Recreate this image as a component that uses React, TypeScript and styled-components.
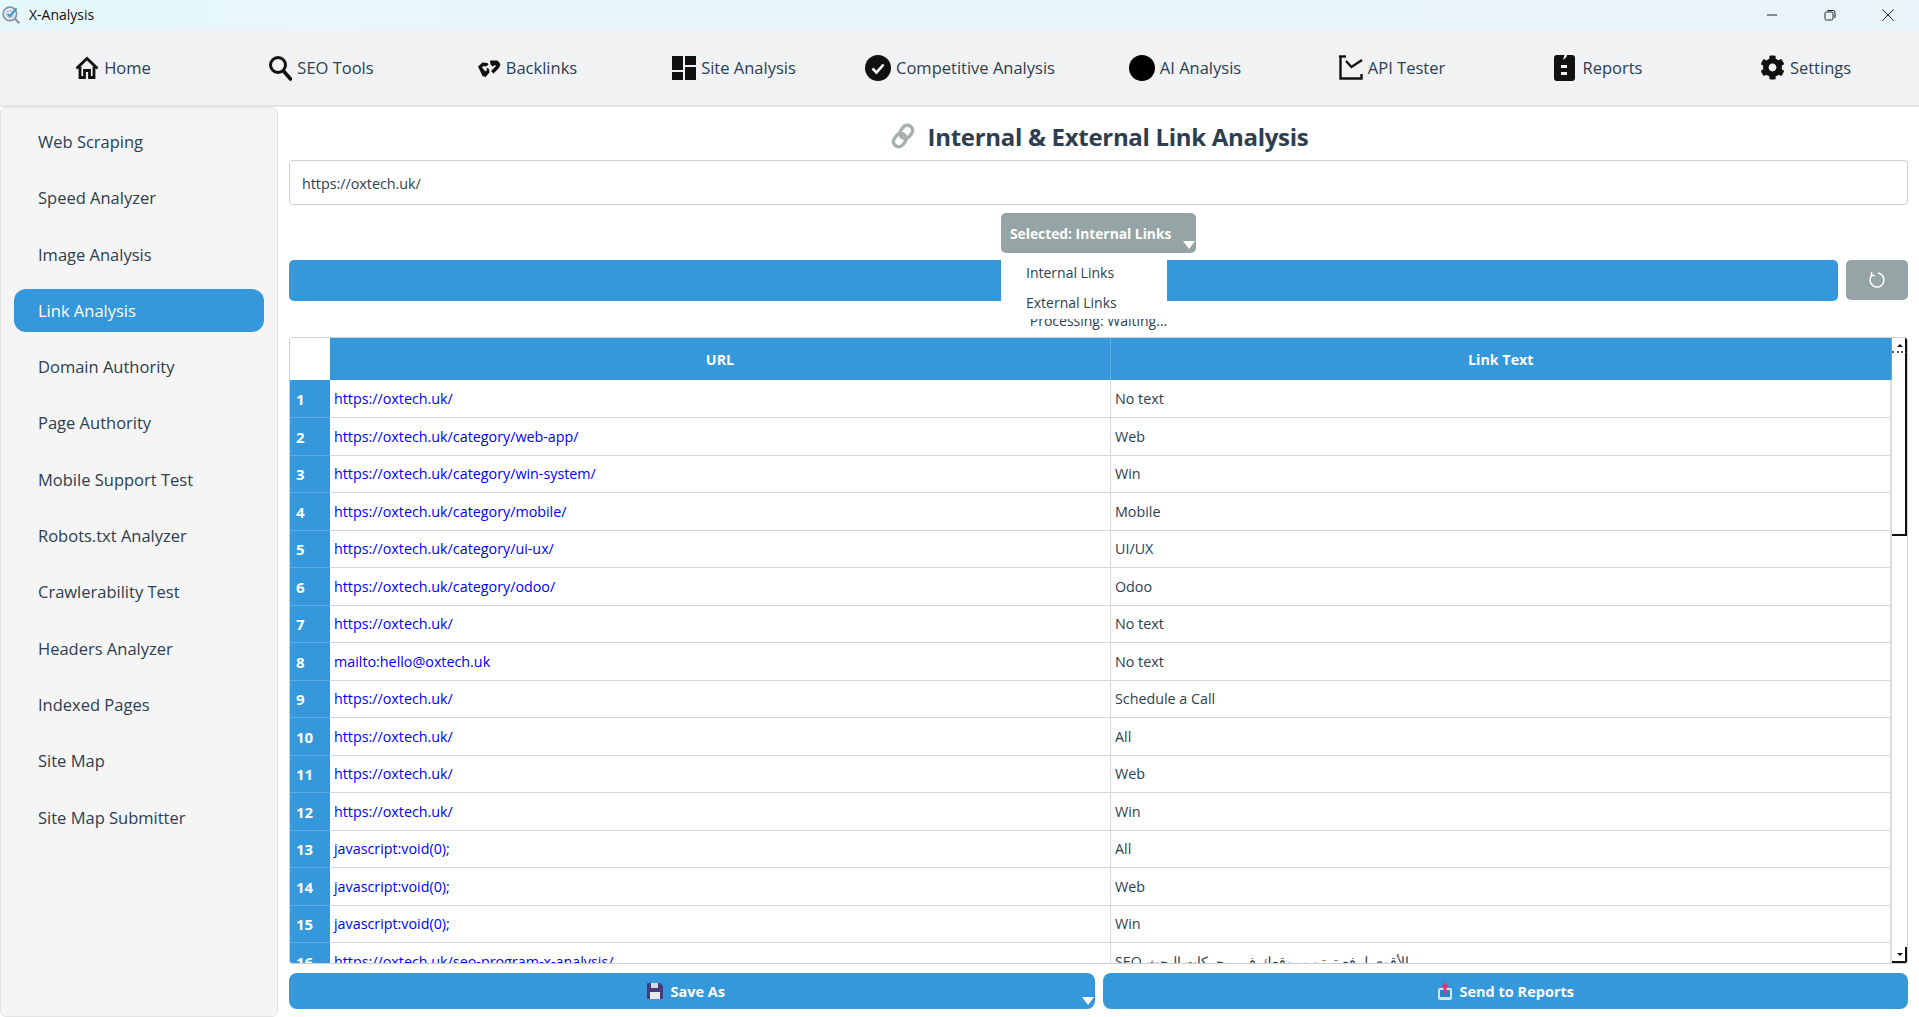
import { FC } from "react";
import styled, { createGlobalStyle } from "styled-components";
import { FaCog } from "react-icons/fa";

const sidebarItems = [
  "Web Scraping",
  "Speed Analyzer",
  "Image Analysis",
  "Link Analysis",
  "Domain Authority",
  "Page Authority",
  "Mobile Support Test",
  "Robots.txt Analyzer",
  "Crawlerability Test",
  "Headers Analyzer",
  "Indexed Pages",
  "Site Map",
  "Site Map Submitter",
];

const rows = [
  ["https://oxtech.uk/", "No text"],
  ["https://oxtech.uk/category/web-app/", "Web"],
  ["https://oxtech.uk/category/win-system/", "Win"],
  ["https://oxtech.uk/category/mobile/", "Mobile"],
  ["https://oxtech.uk/category/ui-ux/", "UI/UX"],
  ["https://oxtech.uk/category/odoo/", "Odoo"],
  ["https://oxtech.uk/", "No text"],
  ["mailto:hello@oxtech.uk", "No text"],
  ["https://oxtech.uk/", "Schedule a Call"],
  ["https://oxtech.uk/", "All"],
  ["https://oxtech.uk/", "Web"],
  ["https://oxtech.uk/", "Win"],
  ["javascript:void(0);", "All"],
  ["javascript:void(0);", "Web"],
  ["javascript:void(0);", "Win"],
  ["https://oxtech.uk/seo-program-x-analysis/", "SEO الأقوى لرفع ترتيب موقعك في محركات البحث"],
];

const HomeGlyph = () => (
  <svg width="24" height="24" viewBox="0 0 24 24" fill="none" stroke="#111" strokeWidth="2.8">
    <path d="M1.500 12.500 12 2.500l10.500 10" />
    <path d="M5 10.500V21.500h4.500v-7h5v7H19V10.500" />
  </svg>
);

const SearchGlyph = () => (
  <svg width="24" height="26" viewBox="0 0 24 26" fill="none" stroke="#111" strokeWidth="3">
    <circle cx="10" cy="10" r="7.500" />
    <path d="m15.500 16 7 8" strokeLinecap="round" strokeWidth="3.600" />
  </svg>
);

const BrokenLinkGlyph = () => (
  <svg width="24" height="18" viewBox="0 0 24 18" fill="#111">
    <path d="M1 7.500 5.500 3.500l5 .5 1 2-3 1.500L6.500 7 5 8.500l3.500 4 1.500-1.500-.500-2.500 2.500 1.500 .5 3.500-4 4.500-3-1Z" />
    <path d="M13 1.500h7.500L23.500 5 22 9l-5.500 5.500-2.500-2.500 5-5-1-1-2.500 1.500-2-2Z" />
  </svg>
);

const GridGlyph = () => (
  <svg width="24" height="24" viewBox="0 0 24 24" fill="#111">
    <rect x="0" y="0" width="11" height="14" />
    <rect x="13" y="0" width="11" height="9" />
    <rect x="13" y="11" width="11" height="13" />
    <rect x="0" y="16" width="11" height="8" />
  </svg>
);

const CheckGlyph = () => (
  <svg width="26" height="26" viewBox="0 0 26 26">
    <circle cx="13" cy="13" r="13" fill="#111" />
    <path d="m7.500 13.500 4 4 7-8" fill="none" stroke="#fff" strokeWidth="2.600" />
  </svg>
);

const DotGlyph = () => (
  <svg width="26" height="26" viewBox="0 0 26 26">
    <circle cx="13" cy="13" r="13" fill="#000" />
  </svg>
);

const ChartGlyph = () => (
  <svg width="24" height="25" viewBox="0 0 24 25" fill="none" stroke="#111" strokeWidth="2.400">
    <path d="M1.500 2v21.500h21V19" />
    <path d="M0 1.500h7" />
    <path d="m7 6 5.500 6L23 5" />
  </svg>
);

const ReportGlyph = () => (
  <svg width="24" height="26" viewBox="0 0 24 26">
    <path d="M3 0h7.500L9 5l3.500-3 .5-2H18a3 3 0 0 1 3 3v20a3 3 0 0 1-3 3H3a3 3 0 0 1-3-3V3a3 3 0 0 1 3-3Z" fill="#111" />
    <rect x="7" y="10" width="6" height="3" fill="#f1f2f4" />
    <rect x="7" y="17" width="6" height="3" fill="#f1f2f4" />
  </svg>
);

const navItems = [
  { label: "Home", icon: <HomeGlyph /> },
  { label: "SEO Tools", icon: <SearchGlyph /> },
  { label: "Backlinks", icon: <BrokenLinkGlyph /> },
  { label: "Site Analysis", icon: <GridGlyph /> },
  { label: "Competitive Analysis", icon: <CheckGlyph /> },
  { label: "AI Analysis", icon: <DotGlyph /> },
  { label: "API Tester", icon: <ChartGlyph /> },
  { label: "Reports", icon: <ReportGlyph /> },
  { label: "Settings", icon: <FaCog size={25} color="#111" /> },
];

const App: FC = () => {
  return (
    <StyledWindow>
      <GlobalStyle />
      <StyledTitleBar>
        <StyledAppName>
          <svg width="20" height="20" viewBox="0 0 18 18" fill="none">
            <circle cx="8" cy="8" r="6" stroke="#8a97a3" strokeWidth="1.600" />
            <circle cx="8" cy="8" r="3" stroke="#b5bec6" strokeWidth="1.200" />
            <path d="m12.500 12.500 4 4" stroke="#8a97a3" strokeWidth="2" />
            <path d="m6 8 2 2 6-7" stroke="#2f8fd0" strokeWidth="1.600" />
          </svg>
          X-Analysis
        </StyledAppName>
        <StyledWindowControls>
          <StyledWindowButton>
            <svg width="12" height="12" viewBox="0 0 12 12" stroke="#222" fill="none">
              <path d="M1 6h10" />
            </svg>
          </StyledWindowButton>
          <StyledWindowButton>
            <svg width="12" height="12" viewBox="0 0 12 12" stroke="#222" fill="none">
              <rect x="1" y="3" width="8" height="8" rx="1.500" />
              <path d="M3.500 1.500h5.500a2 2 0 0 1 2 2V9" />
            </svg>
          </StyledWindowButton>
          <StyledWindowButton>
            <svg width="12" height="12" viewBox="0 0 12 12" stroke="#222" fill="none">
              <path d="m.5.500 11 11M11.500.500l-11 11" />
            </svg>
          </StyledWindowButton>
        </StyledWindowControls>
      </StyledTitleBar>

      <StyledNav>
        {navItems.map((item) => (
          <StyledNavItem key={item.label}>
            {item.icon}
            {item.label}
          </StyledNavItem>
        ))}
      </StyledNav>

      <StyledBody>
        <StyledSidebar>
          {sidebarItems.map((item) => (
            <StyledSideItem key={item} $active={item === "Link Analysis"}>
              {item}
            </StyledSideItem>
          ))}
        </StyledSidebar>

        <StyledMain>
          <StyledHeading>
            <svg width="28" height="28" viewBox="0 0 24 24" fill="none" stroke="#a9aeb1" strokeWidth="3">
              <g transform="rotate(38 12 12)">
                <rect x="7.500" y="1.500" width="9" height="12" rx="4.500" />
                <rect x="7.500" y="10.500" width="9" height="12" rx="4.500" />
              </g>
            </svg>
            Internal &amp; External Link Analysis
          </StyledHeading>

          <StyledUrlInput readOnly value="https://oxtech.uk/" />

          <StyledDropdownRow>
            <StyledDropdown>
              Selected: Internal Links
              <StyledArrow />
              <StyledMenu>
                <StyledMenuItem>Internal Links</StyledMenuItem>
                <StyledMenuItem>External Links</StyledMenuItem>
              </StyledMenu>
            </StyledDropdown>
          </StyledDropdownRow>

          <StyledProgressRow>
            <StyledProgressBar />
            <StyledRefreshButton>
              <svg width="18" height="18" viewBox="0 0 18 18" fill="none" stroke="#fff" strokeWidth="1.500">
                <path d="M10 2.100A7 7 0 1 1 4 4.100" />
                <path d="M3.500 1v3.500h3.500" />
              </svg>
            </StyledRefreshButton>
          </StyledProgressRow>

          <StyledStatus>Processing: Waiting...</StyledStatus>

          <StyledTableFrame>
            <StyledTable>
              <colgroup>
                <col width="40" />
                <col />
                <col />
              </colgroup>
              <thead>
                <tr>
                  <StyledCorner />
                  <StyledHeadCell>URL</StyledHeadCell>
                  <StyledHeadCell>Link Text</StyledHeadCell>
                </tr>
              </thead>
              <tbody>
                {rows.map((row, index) => (
                  <tr key={index}>
                    <StyledRowNumber>{index + 1}</StyledRowNumber>
                    <StyledUrlCell>{row[0]}</StyledUrlCell>
                    <StyledTextCell>{row[1]}</StyledTextCell>
                  </tr>
                ))}
              </tbody>
            </StyledTable>
            <StyledScrollbar>
              <StyledScrollUp />
              <StyledScrollThumb />
              <StyledScrollDown />
            </StyledScrollbar>
          </StyledTableFrame>

          <StyledActions>
            <StyledActionButton $hasMenu>
              <svg width="16" height="16" viewBox="0 0 16 16">
                <path d="M0 1a1 1 0 0 1 1-1h12l3 3v12a1 1 0 0 1-1 1H1a1 1 0 0 1-1-1Z" fill="#4b3a78" />
                <rect x="3" y="9" width="10" height="7" fill="#e8e8ee" />
                <rect x="4" y="0" width="7" height="5" fill="#d8d8e2" />
              </svg>
              Save As
              <StyledArrow />
            </StyledActionButton>
            <StyledActionButton>
              <svg width="16" height="18" viewBox="0 0 16 18">
                <rect x="1" y="6" width="14" height="12" rx="2" fill="#cfe6f5" />
                <rect x="3" y="8" width="10" height="7" fill="#2a82c4" />
                <path d="M8 0 4 5h2.500v6h3V5H12Z" fill="#e8336b" />
              </svg>
              Send to Reports
            </StyledActionButton>
          </StyledActions>
        </StyledMain>
      </StyledBody>
    </StyledWindow>
  );
};

const uiFont = `"Open Sans", "Noto Sans", sans-serif`;

const GlobalStyle = createGlobalStyle`
  html, body {
    margin: 0;
    padding: 0;
    height: 100%;
    overflow: hidden;
    background: #fff;
  }
  #root {
    height: 100%;
  }
`;

const StyledWindow = styled.div`
  display: flex;
  flex-direction: column;
  height: 100vh;
  font-family: ${uiFont};
  color: #2c3e50;
`;

const StyledTitleBar = styled.div`
  display: flex;
  align-items: center;
  justify-content: space-between;
  height: 30px;
  background: linear-gradient(90deg, #e6f7fb, #e9f4fa);
`;

const StyledAppName = styled.div`
  display: flex;
  align-items: center;
  gap: 8px;
  padding: 0 0 1px 1px;
  font-size: 14px;
  color: #111;
`;

const StyledWindowControls = styled.div`
  display: flex;
  padding-right: 2px;
`;

const StyledWindowButton = styled.div`
  display: flex;
  align-items: center;
  justify-content: center;
  width: 58px;
  height: 30px;
`;

const StyledNav = styled.div`
  display: grid;
  grid-template-columns: 226px 190px 222px 192px 260px 190px 224px 188px 227px;
  align-items: center;
  height: 75px;
  background: #f1f2f4;
  border-bottom: 2px solid #e2e4e7;
`;

const StyledNavItem = styled.div`
  display: flex;
  align-items: center;
  justify-content: center;
  gap: 5px;
  font-size: 16.500px;
  color: #2c3e50;
`;

const StyledBody = styled.div`
  display: flex;
  flex: 1;
  min-height: 0;
`;

const StyledSidebar = styled.div`
  display: flex;
  flex-direction: column;
  gap: 13.300px;
  box-sizing: border-box;
  width: 278px;
  padding: 12px 13px 0 13px;
  background: #f5f5f5;
  border: 1px solid #e3e3e3;
  border-radius: 6px;
`;

const StyledSideItem = styled.div<{ $active?: boolean }>`
  display: flex;
  align-items: center;
  height: 43px;
  padding-left: 24px;
  border-radius: 12px;
  font-size: 16.500px;
  color: ${(props) => (props.$active ? "#fff" : "#2c3e50")};
  background: ${(props) => (props.$active ? "#3498db" : "transparent")};
`;

const StyledMain = styled.div`
  display: flex;
  flex-direction: column;
  flex: 1;
  min-width: 0;
  box-sizing: border-box;
  padding: 8px 11px 8px 11px;
`;

const StyledHeading = styled.div`
  display: flex;
  align-items: center;
  justify-content: center;
  gap: 11px;
  box-sizing: border-box;
  height: 45px;
  padding-bottom: 3px;
  font-size: 24px;
  font-weight: 700;
  letter-spacing: -0.300px;
  color: #2c3e50;
`;

const StyledUrlInput = styled.input`
  box-sizing: border-box;
  height: 45px;
  padding: 1px 12px 0;
  border: 1px solid #c9ced2;
  border-radius: 4px;
  outline: none;
  font-family: ${uiFont};
  font-size: 14.300px;
  color: #2c3e50;
`;

const StyledDropdownRow = styled.div`
  display: flex;
  justify-content: center;
  margin-top: 8px;
`;

const StyledDropdown = styled.div`
  position: relative;
  display: flex;
  align-items: center;
  box-sizing: border-box;
  width: 195px;
  height: 40px;
  padding-left: 9px;
  background: #95a5a6;
  border-radius: 5px;
  font-size: 13.800px;
  font-weight: 700;
  white-space: nowrap;
  color: #fff;
`;

const StyledArrow = styled.span`
  position: absolute;
  right: 1px;
  bottom: 4px;
  width: 0;
  height: 0;
  border-left: 6.500px solid transparent;
  border-right: 6.500px solid transparent;
  border-top: 8px solid #fff;
`;

const StyledMenu = styled.div`
  position: absolute;
  top: 40px;
  left: 0;
  z-index: 2;
  box-sizing: border-box;
  width: 166px;
  height: 66px;
  padding-top: 5px;
  background: #fff;
`;

const StyledMenuItem = styled.div`
  display: flex;
  align-items: center;
  height: 29.500px;
  padding-left: 25px;
  font-size: 14px;
  font-weight: 400;
  color: #2c3e50;
`;

const StyledProgressRow = styled.div`
  display: flex;
  gap: 8px;
  margin-top: 7px;
`;

const StyledProgressBar = styled.div`
  flex: 1;
  height: 41px;
  background: #3498db;
  border-radius: 5px;
`;

const StyledRefreshButton = styled.div`
  display: flex;
  align-items: center;
  justify-content: center;
  width: 62px;
  height: 40px;
  background: #95a5a6;
  border-radius: 5px;
`;

const StyledStatus = styled.div`
  display: flex;
  align-items: center;
  justify-content: center;
  box-sizing: border-box;
  height: 36px;
  padding-top: 3px;
  font-size: 14px;
  color: #2c3e50;
`;

const StyledTableFrame = styled.div`
  position: relative;
  flex: 1;
  min-height: 0;
  overflow: hidden;
  border: 1px solid #cdd1d4;
  border-radius: 3px;
  padding-right: 15px;
`;

const StyledTable = styled.table`
  width: 100%;
  table-layout: fixed;
  border-collapse: collapse;
  font-size: 14.300px;
`;

const StyledCorner = styled.th`
  height: 42px;
  padding: 0;
  background: #fff;
`;

const StyledHeadCell = styled.th`
  height: 42px;
  padding: 0;
  background: #3498db;
  border-right: 1px solid #5dade2;
  color: #fff;
  font-size: 14.300px;
  font-weight: 700;
`;

const StyledRowNumber = styled.td`
  height: 37.500px;
  box-sizing: border-box;
  padding: 1px 0 0 6px;
  background: #3498db;
  border-bottom: 1px solid #5dade2;
  color: #fff;
  font-size: 15px;
  font-weight: 700;
`;

const StyledUrlCell = styled.td`
  box-sizing: border-box;
  padding: 0 4px;
  border-right: 1px solid #d8d8d8;
  border-bottom: 1px solid #d8d8d8;
  color: #0000ff;
  white-space: nowrap;
`;

const StyledTextCell = styled.td`
  box-sizing: border-box;
  padding: 0 4px;
  border-right: 2px solid #dcdcdc;
  border-bottom: 1px solid #d8d8d8;
  color: #2c3e50;
  white-space: nowrap;
`;

const StyledScrollbar = styled.div`
  position: absolute;
  top: 0;
  right: 0;
  bottom: 0;
  display: flex;
  flex-direction: column;
  width: 15px;
  background: #fff;
`;

const StyledScrollUp = styled.div`
  position: relative;
  flex: none;
  height: 13px;
  border-right: 2px solid #111;
  border-bottom: 2px dotted #555;

  &::after {
    content: "";
    position: absolute;
    top: 6px;
    left: 5px;
    border-left: 3px solid transparent;
    border-right: 3px solid transparent;
    border-bottom: 3px solid #111;
  }
`;

const StyledScrollThumb = styled.div`
  flex: none;
  height: 181px;
  border-right: 2px solid #111;
  border-bottom: 2px solid #111;
`;

const StyledScrollDown = styled.div`
  position: relative;
  flex: none;
  height: 14px;
  margin-top: auto;
  border-right: 2px solid #111;
  border-bottom: 2px solid #111;

  &::after {
    content: "";
    position: absolute;
    top: 6px;
    left: 5px;
    border-left: 3px solid transparent;
    border-right: 3px solid transparent;
    border-top: 3px solid #111;
  }
`;

const StyledActions = styled.div`
  display: flex;
  gap: 8px;
  margin-top: 9px;
`;

const StyledActionButton = styled.div<{ $hasMenu?: boolean }>`
  position: relative;
  display: flex;
  flex: 1 1 50%;
  align-items: center;
  justify-content: center;
  gap: 7px;
  box-sizing: border-box;
  height: 36px;
  padding-right: ${(props) => (props.$hasMenu ? "11px" : "0")};
  background: #3498db;
  border-radius: 8px;
  font-size: 14.500px;
  font-weight: 700;
  color: #fff;
`;

export default App;
